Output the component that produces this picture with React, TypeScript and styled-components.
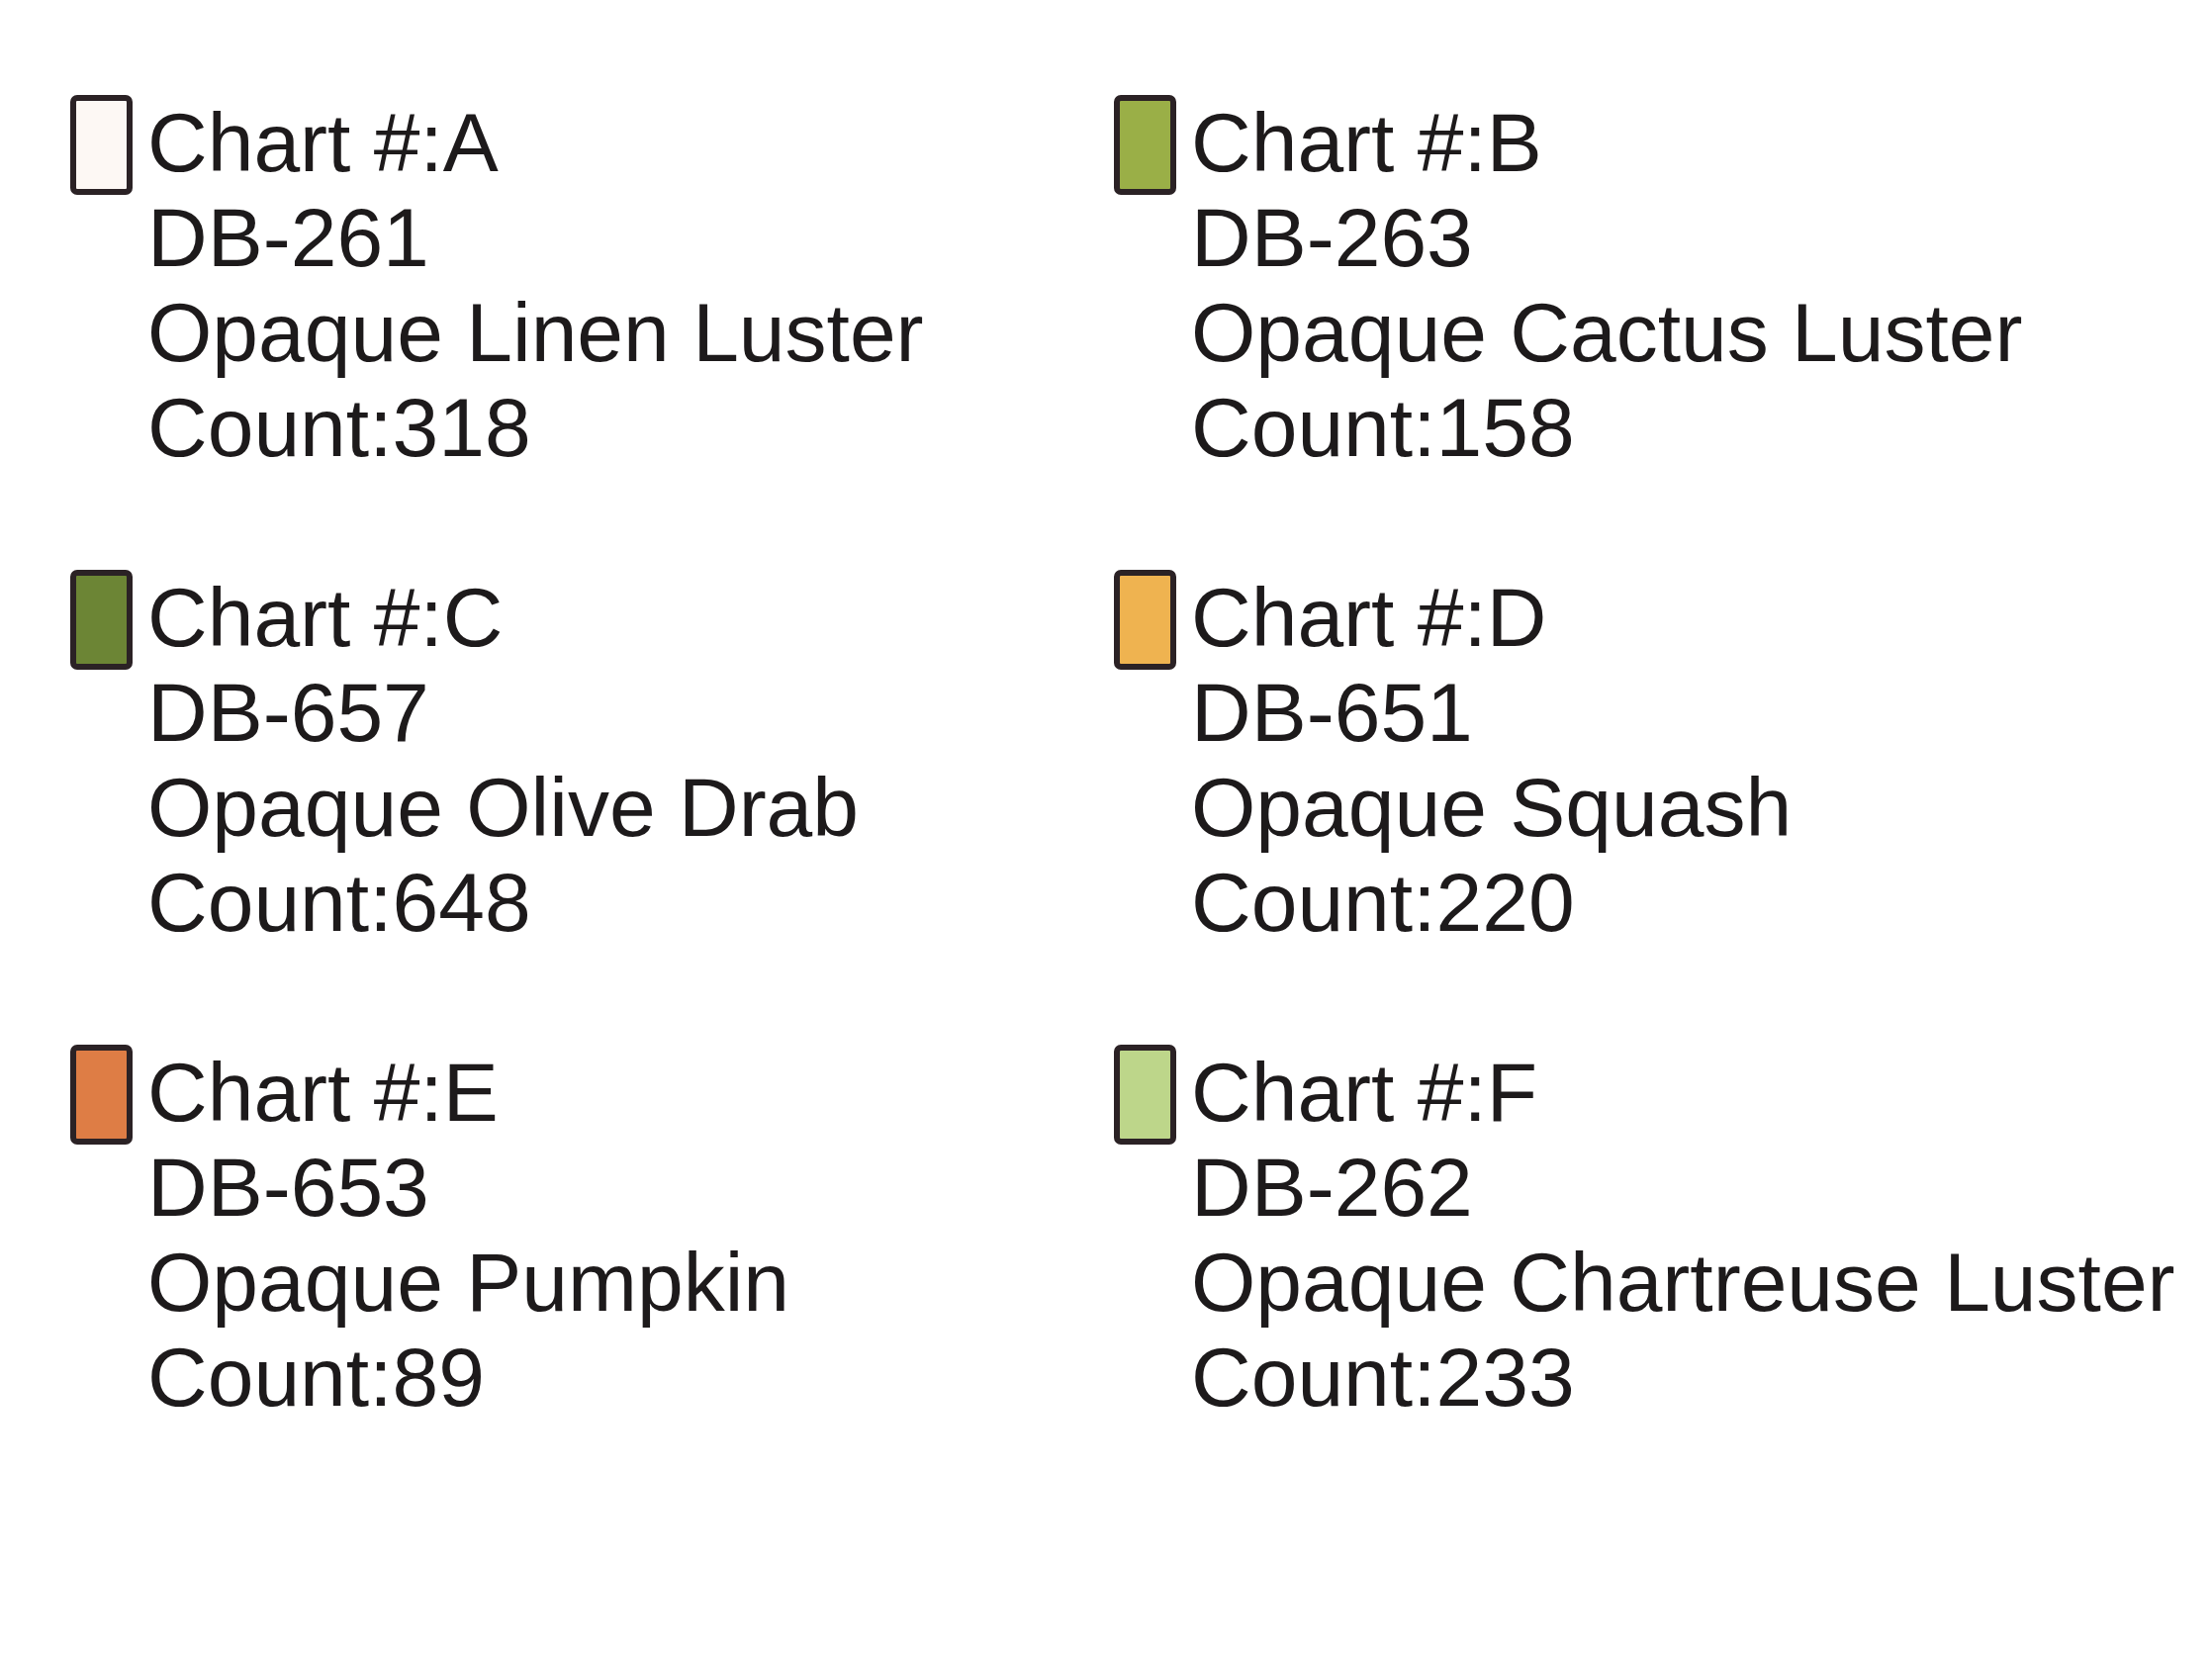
import React from "react";
import styled, {createGlobalStyle} from "styled-components";


interface Chart {
	letter: string,
	code: string,
	name: string,
	count: number,
	color: string
}

const Charts: Chart[] = [
	{letter: "A", code: "DB-261", name: "Opaque Linen Luster", count: 318, color: "#fdf8f4"},
	{letter: "B", code: "DB-263", name: "Opaque Cactus Luster", count: 158, color: "#9aaf47"},
	{letter: "C", code: "DB-657", name: "Opaque Olive Drab", count: 648, color: "#6c8535"},
	{letter: "D", code: "DB-651", name: "Opaque Squash", count: 220, color: "#efb350"},
	{letter: "E", code: "DB-653", name: "Opaque Pumpkin", count: 89, color: "#de7d45"},
	{letter: "F", code: "DB-262", name: "Opaque Chartreuse Luster", count: 233, color: "#bdd68a"}
];


const GlobalStyle = createGlobalStyle`
	html, body {
		margin: 0;
		padding: 0;
		background: #ffffff;
	}
`;

const Legend = styled.div`
	display: grid;
	grid-template-columns: 1055px 1055px;
	row-gap: 96px;
	padding: 96px 0 0 71px;
	font-family: "Liberation Sans", Arial, sans-serif;
	color: #1d1a1b;
`;

const Entry = styled.div`
	display: flex;
	align-items: flex-start;
	gap: 15px;
`;

const Swatch = styled.div<{color: string}>`
	flex: none;
	width: 63px;
	height: 101px;
	box-sizing: border-box;
	border: 6px solid #2b2225;
	border-radius: 7px;
	background: ${props => props.color};
`;

const Lines = styled.div`
	font-size: 84px;
	line-height: 96px;
	white-space: nowrap;
`;


export default function App()
{
	return (
		<>
			<GlobalStyle />
			<Legend>
				{Charts.map(chart => (
					<Entry key={chart.letter}>
						<Swatch color={chart.color} />
						<Lines>
							<div>Chart #:{chart.letter}</div>
							<div>{chart.code}</div>
							<div>{chart.name}</div>
							<div>Count:{chart.count}</div>
						</Lines>
					</Entry>
				))}
			</Legend>
		</>
	);
}
